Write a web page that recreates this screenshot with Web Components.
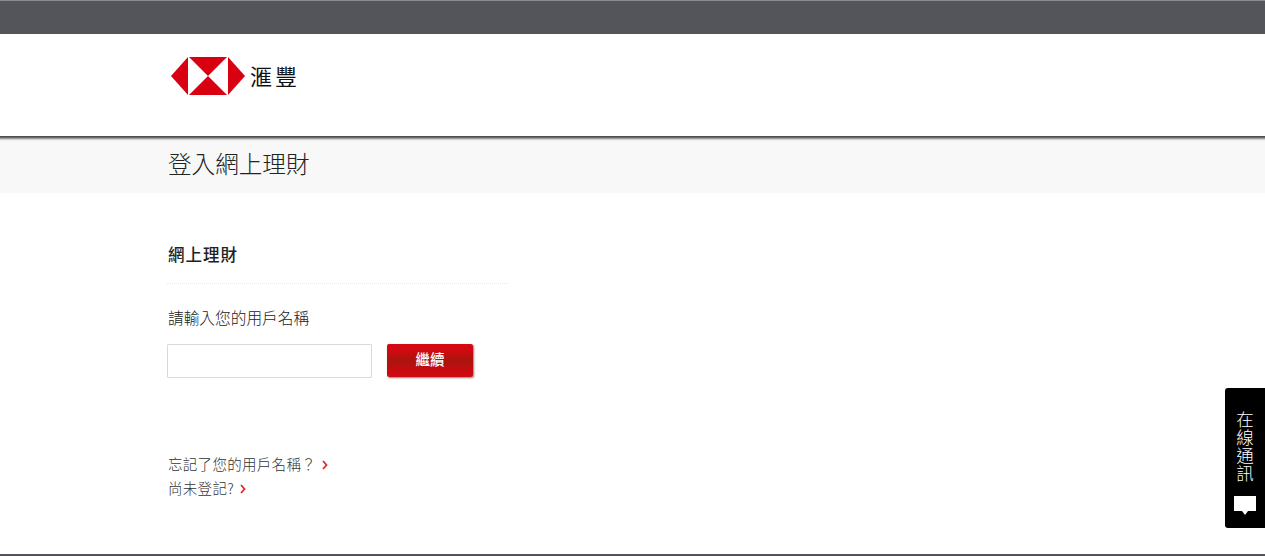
<!DOCTYPE html>
<html lang="zh-Hant">
<head>
<meta charset="utf-8">
<title>登入網上理財</title>
<style>
  html, body { margin: 0; height: 100%; overflow: hidden; background: #fff; }
  body {
    font-family: "Noto Sans CJK TC", "Liberation Sans", sans-serif;
    color: #333;
    display: flex;
    flex-direction: column;
  }
</style>
</head>
<body>
<site-topbar></site-topbar>
<site-header></site-header>
<page-title>登入網上理財</page-title>
<login-panel heading="網上理財" label="請輸入您的用戶名稱" action="繼續">
  <help-link>忘記了您的用戶名稱？</help-link>
  <help-link>尚未登記?</help-link>
</login-panel>
<site-footer></site-footer>
<chat-tab>在線通訊</chat-tab>

<script>
// top grey strip
class SiteTopbar extends HTMLElement {
  constructor() {
    super();
    this.attachShadow({ mode: 'open' });
    this.shadowRoot.innerHTML = `
      <style>
        :host {
          display: block;
          flex: none;
          height: 33px;
          background: #54555a;
          border-top: 1px solid #8b8c90;
        }
      </style>
    `;
  }
}

// logo row
class SiteHeader extends HTMLElement {
  constructor() {
    super();
    this.attachShadow({ mode: 'open' });
    this.shadowRoot.innerHTML = `
      <style>
        :host {
          display: block;
          flex: none;
          height: 102px;
          background: #fff;
        }
        .logo {
          display: flex;
          align-items: center;
          gap: 5px;
          padding: 23px 0 0 171px;
        }
        svg { display: block; }
        .name {
          margin-top: -2px;
          font-size: 22px;
          line-height: 38px;
          letter-spacing: 3px;
          color: #111;
          font-weight: 400;
        }
      </style>
      <div class="logo">
        <svg width="74" height="38" viewBox="0 0 74 38" aria-hidden="true">
          <polygon points="18,0 56,0 37,19" fill="#d80011"/>
          <polygon points="18,38 56,38 37,19" fill="#d80011"/>
          <polygon points="0,19 17,0 17,38" fill="#d80011"/>
          <polygon points="74,19 57,0 57,38" fill="#d80011"/>
        </svg>
        <span class="name">滙豐</span>
      </div>
    `;
  }
}

// grey band with the page name
class PageTitle extends HTMLElement {
  constructor() {
    super();
    this.attachShadow({ mode: 'open' });
    this.shadowRoot.innerHTML = `
      <style>
        :host {
          display: block;
          flex: none;
          height: 57px;
          box-sizing: border-box;
          padding-left: 168px;
          background: linear-gradient(#3f3f42 0, #6d6d70 1.5px, #b4b4b6 3px, #efefef 4px, #f8f8f8 6px);
          font-size: 23.6px;
          font-weight: 300;
          line-height: 55px;
          color: #222;
        }
      </style>
      <slot></slot>
    `;
  }
}

// the username form
class LoginPanel extends HTMLElement {
  constructor() {
    super();
    this.attachShadow({ mode: 'open' });
    this.shadowRoot.innerHTML = `
      <style>
        :host {
          display: block;
          flex: 1;
          padding: 49px 0 0 167px;
        }
        h2 {
          margin: 0 0 0 1px;
          font-size: 16.5px;
          line-height: 24px;
          letter-spacing: 1px;
          font-weight: 500;
          color: #222;
        }
        .rule {
          width: 340px;
          height: 0;
          margin-top: 17px;
          border-top: 1px dotted #e8e8e8;
        }
        label {
          display: block;
          margin: 22px 0 14px 1px;
          font-size: 15.7px;
          line-height: 24px;
          font-weight: 300;
          color: #222;
        }
        .row {
          display: flex;
          align-items: flex-start;
          gap: 15px;
        }
        input {
          box-sizing: border-box;
          width: 205px;
          height: 34px;
          margin: 0;
          padding: 0 8px;
          border: 1px solid #d9d9d9;
          border-radius: 1px;
          background: #fff;
          outline: none;
        }
        button {
          width: 86px;
          height: 33px;
          padding: 0 0 3px;
          border: none;
          border-radius: 2px;
          background: linear-gradient(#d30812 0, #cf0a10 22%, #a8160f 50%, #c60a10 78%, #d00a12 100%);
          box-shadow: 1px 1px 2px rgba(0, 0, 0, 0.5);
          color: #fff;
          font: 500 14.5px/30px "Noto Sans CJK TC", "Liberation Sans", sans-serif;
        }
        .links {
          display: flex;
          flex-direction: column;
          margin: 73px 0 0 1px;
        }
      </style>
      <h2></h2>
      <div class="rule"></div>
      <label for="user"></label>
      <div class="row">
        <input id="user" type="text" autocomplete="off">
        <button type="button"></button>
      </div>
      <div class="links"><slot></slot></div>
    `;
  }

  connectedCallback() {
    this.shadowRoot.querySelector('h2').textContent = this.getAttribute('heading');
    this.shadowRoot.querySelector('label').textContent = this.getAttribute('label');
    this.shadowRoot.querySelector('button').textContent = this.getAttribute('action');
  }
}

// text link with the red chevron behind it
class HelpLink extends HTMLElement {
  constructor() {
    super();
    this.attachShadow({ mode: 'open' });
    this.shadowRoot.innerHTML = `
      <style>
        :host {
          display: flex;
          align-items: center;
          gap: 6px;
          height: 24px;
          font-size: 14.5px;
          letter-spacing: 0.3px;
          font-weight: 300;
          color: #333;
        }
        svg { display: block; margin-top: 3px; }
      </style>
      <slot></slot>
      <svg width="6" height="10" viewBox="0 0 6 10" aria-hidden="true">
        <path d="M1 1l3.5 4L1 9" fill="none" stroke="#db2b2b" stroke-width="1.8"/>
      </svg>
    `;
  }
}

// bottom rule of the page
class SiteFooter extends HTMLElement {
  constructor() {
    super();
    this.attachShadow({ mode: 'open' });
    this.shadowRoot.innerHTML = `
      <style>
        :host {
          display: block;
          flex: none;
          height: 2px;
          background: #54555a;
        }
      </style>
    `;
  }
}

// live chat tab, sticks to the right edge over the page
class ChatTab extends HTMLElement {
  constructor() {
    super();
    this.attachShadow({ mode: 'open' });
    this.shadowRoot.innerHTML = `
      <style>
        :host {
          position: fixed;
          right: 0;
          top: 388px;
          width: 40px;
          height: 140px;
          box-sizing: border-box;
          display: flex;
          flex-direction: column;
          align-items: center;
          padding-top: 23px;
          background: #000;
          border-radius: 3px 0 0 3px;
          color: #fff;
          font-size: 17.5px;
          font-weight: 300;
        }
        .text {
          writing-mode: vertical-rl;
          line-height: 17px;
          letter-spacing: 0.5px;
        }
        svg { display: block; margin-top: 13px; }
      </style>
      <div class="text"><slot></slot></div>
      <svg width="22" height="20" viewBox="0 0 22 20" aria-hidden="true">
        <path d="M0 0h22v15h-8l-3 4-3-4H0z" fill="#fff"/>
      </svg>
    `;
  }
}

customElements.define('site-topbar', SiteTopbar);
customElements.define('site-header', SiteHeader);
customElements.define('page-title', PageTitle);
customElements.define('login-panel', LoginPanel);
customElements.define('help-link', HelpLink);
customElements.define('site-footer', SiteFooter);
customElements.define('chat-tab', ChatTab);
</script>
</body>
</html>
